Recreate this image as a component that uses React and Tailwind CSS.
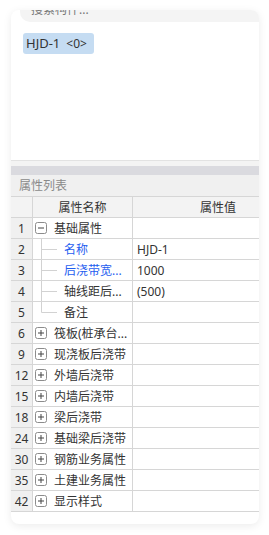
const font = { fontFamily: '"Noto Sans", "Noto Sans CJK SC", sans-serif' };

const rows = [
  { n: '1', label: '基础属性', box: 'minus' },
  { n: '2', label: '名称', child: true, blue: true, value: 'HJD-1' },
  { n: '3', label: '后浇带宽...', child: true, blue: true, value: '1000' },
  { n: '4', label: '轴线距后...', child: true, value: '(500)' },
  { n: '5', label: '备注', child: true, last: true },
  { n: '6', label: '筏板(桩承台...', box: 'plus' },
  { n: '9', label: '现浇板后浇带', box: 'plus' },
  { n: '12', label: '外墙后浇带', box: 'plus' },
  { n: '15', label: '内墙后浇带', box: 'plus' },
  { n: '18', label: '梁后浇带', box: 'plus' },
  { n: '24', label: '基础梁后浇带', box: 'plus' },
  { n: '30', label: '钢筋业务属性', box: 'plus' },
  { n: '35', label: '土建业务属性', box: 'plus' },
  { n: '42', label: '显示样式', box: 'plus' },
];

function Toggle({ type }) {
  return (
    <svg width="12" height="12" viewBox="0 0 12 12" className="shrink-0">
      <rect x="0.5" y="0.5" width="11" height="11" rx="2" fill="#fff" stroke="#8c8c8c" />
      <line x1="3" y1="6" x2="9" y2="6" stroke="#444" />
      {type === 'plus' && <line x1="6" y1="3" x2="6" y2="9" stroke="#444" />}
    </svg>
  );
}

function Branch({ last }) {
  return (
    <svg width="31" height="20" viewBox="0 0 31 20" className="shrink-0">
      <line x1="8.5" y1="0" x2="8.5" y2={last ? 10.5 : 20} stroke="#d2d2d2" />
      <line x1="8.5" y1="10.5" x2="24" y2="10.5" stroke="#d2d2d2" />
    </svg>
  );
}

export default function App() {
  return (
    <div className="w-[269px] h-[535px] bg-white pt-[10px] pl-[11px] text-[12px] text-[#333]" style={font}>
      <div className="w-[248px] h-[514px] bg-white rounded-lg overflow-hidden shadow-[0_2px_8px_rgba(0,0,0,0.08)] flex flex-col">
        {/* 构件列表 */}
        <div className="h-[151px] shrink-0 border-b border-[#e2e2e2] flex flex-col">
          <div className="-mt-[12px] ml-[9px] h-[24px] shrink-0 bg-[#f4f4f4] rounded-bl-[10px] flex items-center pl-[11px] text-[#777]">
            搜索构件...
          </div>
          <div className="mt-[11px] ml-[12px] w-[71px] h-[21px] bg-[#c5dcf2] rounded-[3px] flex items-center pl-[3px] text-[13px] text-[#333]">
            HJD-1<span className="ml-[6px] text-[12px]">&lt;0&gt;</span>
          </div>
        </div>
        <div className="h-[5px] shrink-0 bg-[#f3f3f3]"></div>
        <div className="h-[9px] shrink-0 bg-[#dadadf]"></div>

        {/* 属性列表 */}
        <div className="h-[22px] shrink-0 bg-[#f0f0f0] border-b border-[#d6d6d6] flex items-center pl-[8px] text-[#8a8a8a]">
          属性列表
        </div>
        <div className="flex h-[21px] shrink-0 border-b border-[#d6d6d6] bg-[#f3f3f3]">
          <div className="w-[22px] border-r border-[#d6d6d6]"></div>
          <div className="w-[100px] border-r border-[#d6d6d6] flex items-center justify-center pt-[2px]">属性名称</div>
          <div className="flex-1 flex items-center pl-[67px] pt-[2px] whitespace-nowrap">属性值</div>
        </div>
        {rows.map((r) => (
          <div key={r.n} className="flex h-[21px] shrink-0 border-b border-[#d6d6d6]">
            <div className="w-[22px] shrink-0 bg-[#f0f0f0] border-r border-[#d6d6d6] flex items-center justify-center pt-[1px]">
              {r.n}
            </div>
            <div className="w-[100px] shrink-0 border-r border-[#d6d6d6] flex items-center whitespace-nowrap overflow-hidden">
              {r.child ? (
                <>
                  <Branch last={r.last} />
                  <span className={r.blue ? 'pt-[1px] text-[#1f5ef0]' : 'pt-[1px]'}>{r.label}</span>
                </>
              ) : (
                <>
                  <span className="ml-[2px] flex"><Toggle type={r.box} /></span>
                  <span className="ml-[7px] pt-[1px]">{r.label}</span>
                </>
              )}
            </div>
            <div className="flex-1 flex items-center pl-[4px] pt-[1px]">{r.value}</div>
          </div>
        ))}
      </div>
    </div>
  );
}
